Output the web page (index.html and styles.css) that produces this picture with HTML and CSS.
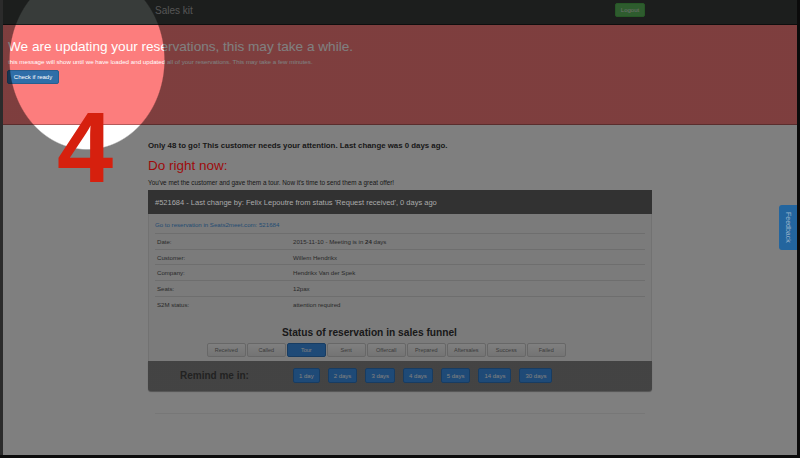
FILE: index.html
```html
<!DOCTYPE html>
<html>
<head>
<meta charset="utf-8">
<title>Sales kit</title>
<link rel="stylesheet" href="styles.css">
</head>
<body>
<div class="frame">
  <header class="navbar">
    <div class="nav-inner">
      <span class="brand">Sales kit</span>
      <button class="btn-logout">Logout</button>
    </div>
  </header>
  <section class="alert-band">
    <h1 class="alert-title">We are updating your reservations, this may take a while.</h1>
    <p class="alert-text">this message will show until we have loaded and updated all of your reservations. This may take a few minutes.</p>
    <button class="btn-check">Check if ready</button>
  </section>
  <main class="content">
    <p class="lead">Only 48 to go! This customer needs your attention. Last change was 0 days ago.</p>
    <h2 class="do-now">Do right now:</h2>
    <p class="instruction">You've met the customer and gave them a tour. Now it's time to send them a great offer!</p>
    <div class="panel">
      <div class="panel-heading">#521684 - Last change by: Felix Lepoutre from status 'Request received', 0 days ago</div>
      <div class="panel-body">
        <a class="res-link">Go to reservation in Seats2meet.com: 521684</a>
        <div class="details">
          <div class="row"><span>Date:</span><span>2015-11-10 - Meeting is in <b>24</b> days</span></div>
          <div class="row"><span>Customer:</span><span>Willem Hendrikx</span></div>
          <div class="row"><span>Company:</span><span>Hendrikx Van der Spek</span></div>
          <div class="row"><span>Seats:</span><span>12pax</span></div>
          <div class="row"><span>S2M status:</span><span>attention required</span></div>
        </div>
        <h3 class="status-title">Status of reservation in sales funnel</h3>
        <div class="btn-group">
          <button class="step-btn">Received</button>
          <button class="step-btn">Called</button>
          <button class="step-btn active">Tour</button>
          <button class="step-btn">Sent</button>
          <button class="step-btn">Offercall</button>
          <button class="step-btn">Prepared</button>
          <button class="step-btn">Aftersales</button>
          <button class="step-btn">Success</button>
          <button class="step-btn">Failed</button>
        </div>
      </div>
      <div class="remind">
        <span class="remind-label">Remind me in:</span>
        <div class="remind-btns">
          <button class="remind-btn">1 day</button>
          <button class="remind-btn">2 days</button>
          <button class="remind-btn">3 days</button>
          <button class="remind-btn">4 days</button>
          <button class="remind-btn">5 days</button>
          <button class="remind-btn">14 days</button>
          <button class="remind-btn">30 days</button>
        </div>
      </div>
    </div>
    <hr class="divider">
  </main>
</div>
<div class="spotlight"></div>
<div class="step-number">4</div>
<div class="feedback">Feedback</div>
</body>
</html>
```

FILE: styles.css
```css
* { box-sizing: border-box; }
html, body { margin: 0; padding: 0; }
body {
  position: relative;
  width: 800px;
  height: 458px;
  overflow: hidden;
  background: #161616;
  font-family: "Liberation Sans", Arial, sans-serif;
}
button { font-family: "Liberation Sans", Arial, sans-serif; padding: 0; cursor: pointer; }

.frame {
  height: 455px;
  margin-right: 3px;
  border-left: 3px solid #565656;
  background: #fff;
  display: flex;
  flex-direction: column;
}

/* navbar */
.navbar {
  height: 25px;
  flex: none;
  background: #383c3a;
  border-bottom: 1px solid #1c1c1c;
  padding-top: 3px;
}
.nav-inner {
  width: 504px;
  height: 14px;
  margin: 0 auto;
  padding: 0 7px;
  display: flex;
  justify-content: space-between;
  align-items: center;
}
.brand { font-size: 10px; color: #aaa; }
.btn-logout {
  width: 30px;
  height: 14px;
  font-size: 6px;
  color: #dcdcdc;
  background: #5cb85c;
  border: 1px solid #4cae4c;
  border-radius: 2px;
}

/* alert band */
.alert-band {
  height: 100px;
  flex: none;
  background: #fc7d7d;
  border-bottom: 1px solid #b45a5a;
  padding: 13px 5px 0;
  color: #fff;
}
.alert-title {
  margin: 0;
  font-size: 13.6px;
  line-height: 18px;
  font-weight: normal;
}
.alert-text {
  margin: 2px 0 0;
  font-size: 6.2px;
  line-height: 8px;
}
.btn-check {
  display: block;
  margin: 4px 0 0 -1px;
  width: 52px;
  height: 14px;
  font-size: 6px;
  color: #fff;
  background: #2f6ea8;
  border: 1px solid #285e8e;
  border-radius: 2px;
}

/* content */
.content {
  width: 504px;
  margin: 0 auto;
}
.lead {
  margin: 16px 0 0;
  font-size: 7.85px;
  line-height: 10px;
  font-weight: bold;
  color: #333;
}
.do-now {
  position: relative;
  z-index: 3;
  margin: 7px 0 0;
  font-size: 13.5px;
  line-height: 16px;
  font-weight: normal;
  color: #9e0c0c;
}
.instruction {
  margin: 4.5px 0 0;
  font-size: 6.35px;
  line-height: 8px;
  color: #333;
}

.panel { margin-top: 3.5px; }
.panel-heading {
  position: relative;
  z-index: 3;
  height: 24px;
  display: flex;
  align-items: center;
  padding-left: 7px;
  background: #323232;
  color: #aaa;
  font-size: 7.5px;
}
.panel-body {
  background: #f6f6f6;
  border-left: 1px solid #e4e4e4;
  border-right: 1px solid #e4e4e4;
  padding: 7px 6px 4px;
}
.res-link {
  display: block;
  font-size: 6.1px;
  line-height: 8px;
  color: #4a9ae6;
}
.details { margin-top: 4px; }
.row {
  display: grid;
  grid-template-columns: 136px 1fr;
  align-items: center;
  height: 15.7px;
  padding-left: 2px;
  border-top: 1px solid #ddd;
  font-size: 6.1px;
  color: #555;
}
.status-title {
  margin: 16px 0 0 127px;
  font-size: 10.2px;
  line-height: 12px;
  font-weight: bold;
  color: #333;
}
.btn-group {
  display: flex;
  gap: 1.5px;
  margin: 3.5px 0 0 52px;
}
.step-btn {
  width: 38.5px;
  height: 14px;
  font-size: 5.5px;
  color: #777;
  background: linear-gradient(#fff, #e8e8e8);
  border: 1px solid #cfcfcf;
  border-radius: 2px;
}
.step-btn.active {
  background: #3d94ee;
  border-color: #2f78c4;
  color: #fff;
}

.remind {
  height: 30px;
  display: flex;
  align-items: center;
  padding-left: 32px;
  background: #878787;
  border-radius: 0 0 3px 3px;
  box-shadow: 0 1px 1px rgba(0,0,0,.35);
}
.remind-label {
  width: 113px;
  font-size: 10px;
  font-weight: bold;
  color: #444;
}
.remind-btns { display: flex; gap: 8px; }
.remind-btn {
  height: 15px;
  padding: 0 5px;
  font-size: 6px;
  color: #fff;
  background: #3d94ee;
  border: 1px solid #2f78c4;
  border-radius: 2px;
}
.divider {
  margin: 22px 7px 0;
  border: 0;
  border-top: 1px solid #eee;
}

/* tour overlay */
.spotlight {
  position: absolute;
  inset: 0;
  z-index: 2;
  pointer-events: none;
  background: radial-gradient(ellipse 78px 90px at 87px 60px, rgba(0,0,0,0) 98.5%, rgba(0,0,0,.5) 100%);
}
.step-number {
  position: absolute;
  left: 57px;
  top: 97px;
  z-index: 4;
  font-size: 101px;
  line-height: 100px;
  font-weight: bold;
  color: #d6200e;
}
.feedback {
  position: absolute;
  right: 3px;
  top: 205px;
  z-index: 4;
  width: 18px;
  height: 45px;
  display: flex;
  align-items: center;
  justify-content: center;
  writing-mode: vertical-rl;
  background: #23659e;
  border-radius: 3px 0 0 3px;
  color: #9db5cc;
  font-size: 7px;
}
```
